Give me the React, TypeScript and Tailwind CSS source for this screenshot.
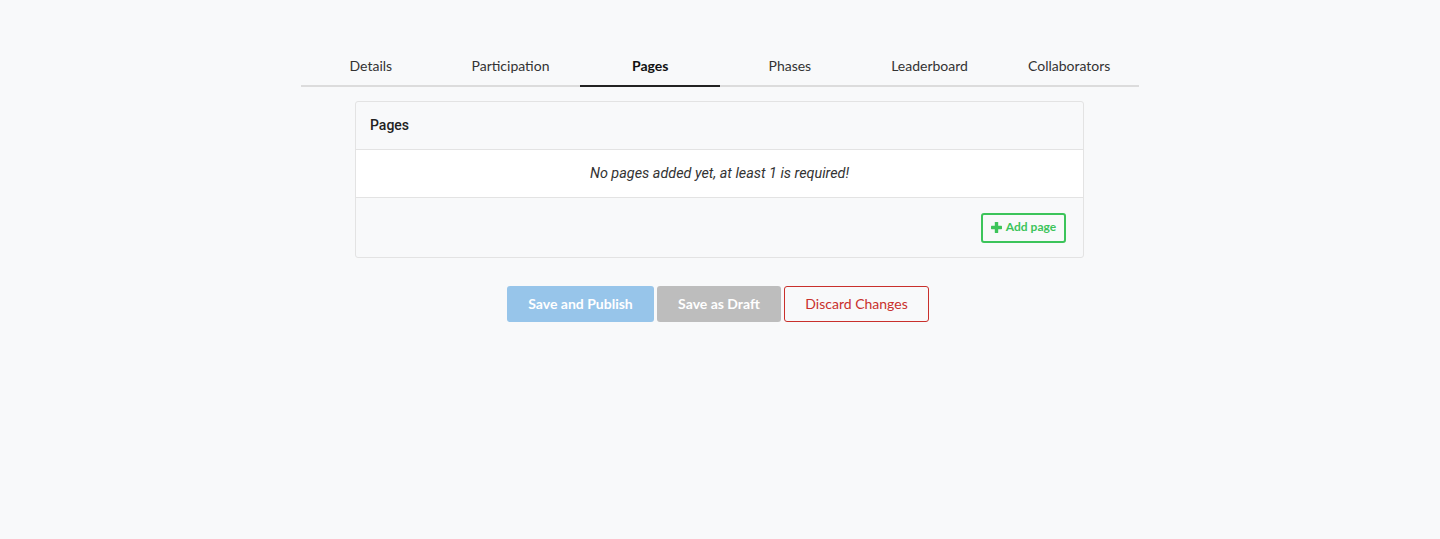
const tabs = ["Details", "Participation", "Pages", "Phases", "Leaderboard", "Collaborators"];

export default function App() {
  return (
    <div className="min-h-[539px] bg-[#f8f9fa] pt-[45px] font-['Lato',sans-serif] text-[#222]">
      <div className="mx-auto w-[838px]">
        {/* tabs */}
        <div className="flex border-b-2 border-[#dcdcdc]">
          {tabs.map((t) => (
            <div
              key={t}
              className={`relative flex h-[40px] flex-1 items-center justify-center pt-[1px] text-[14px] ${
                t === "Pages" ? "font-bold text-[#111]" : "text-[#333]"
              }`}
            >
              {t}
              {t === "Pages" && (
                <span className="absolute -bottom-[2px] left-0 right-0 h-[2px] bg-[#222]" />
              )}
            </div>
          ))}
        </div>

        {/* card */}
        <div className="ml-[54px] mt-[14px] w-[729px] rounded-[3px] border border-[#e3e3e3] bg-[#f8f9fa] font-['Roboto',sans-serif]">
          <div className="flex h-[47px] items-center px-[14px] text-[14px] font-medium text-[#222]">
            Pages
          </div>
          <div className="flex h-[49px] items-center justify-center border-y border-[#e3e3e3] bg-white text-[14.4px] italic text-[#333]">
            No pages added yet, at least 1 is required!
          </div>
          <div className="flex h-[59px] items-center justify-end pr-[17px]">
            <button className="flex h-[30px] w-[85px] items-center justify-center gap-[4px] rounded-[3px] border-2 border-[#3cc45a] pb-[1px] font-['Lato',sans-serif] text-[12px] font-bold text-[#3cc45a]">
              <svg width="11" height="11" viewBox="0 0 11 11" fill="currentColor">
                <rect x="3.8" y="0" width="3.4" height="11" rx="0.6" />
                <rect x="0" y="3.8" width="11" height="3.4" rx="0.6" />
              </svg>
              Add page
            </button>
          </div>
        </div>

        {/* actions */}
        <div className="mt-[28px] flex justify-center gap-[3px] pr-[4px]">
          <button className="h-[36px] w-[147px] rounded-[3px] bg-[#97c5ea] pb-[2px] text-[14px] font-bold text-white">
            Save and Publish
          </button>
          <button className="h-[36px] w-[124px] rounded-[3px] bg-[#bdbdbd] pb-[2px] text-[14px] font-bold text-white">
            Save as Draft
          </button>
          <button className="h-[36px] w-[145px] rounded-[3px] border border-[#c9302c] bg-[#f8f9fa] pb-[2px] text-[14px] text-[#c9302c]">
            Discard Changes
          </button>
        </div>
      </div>
    </div>
  );
}
